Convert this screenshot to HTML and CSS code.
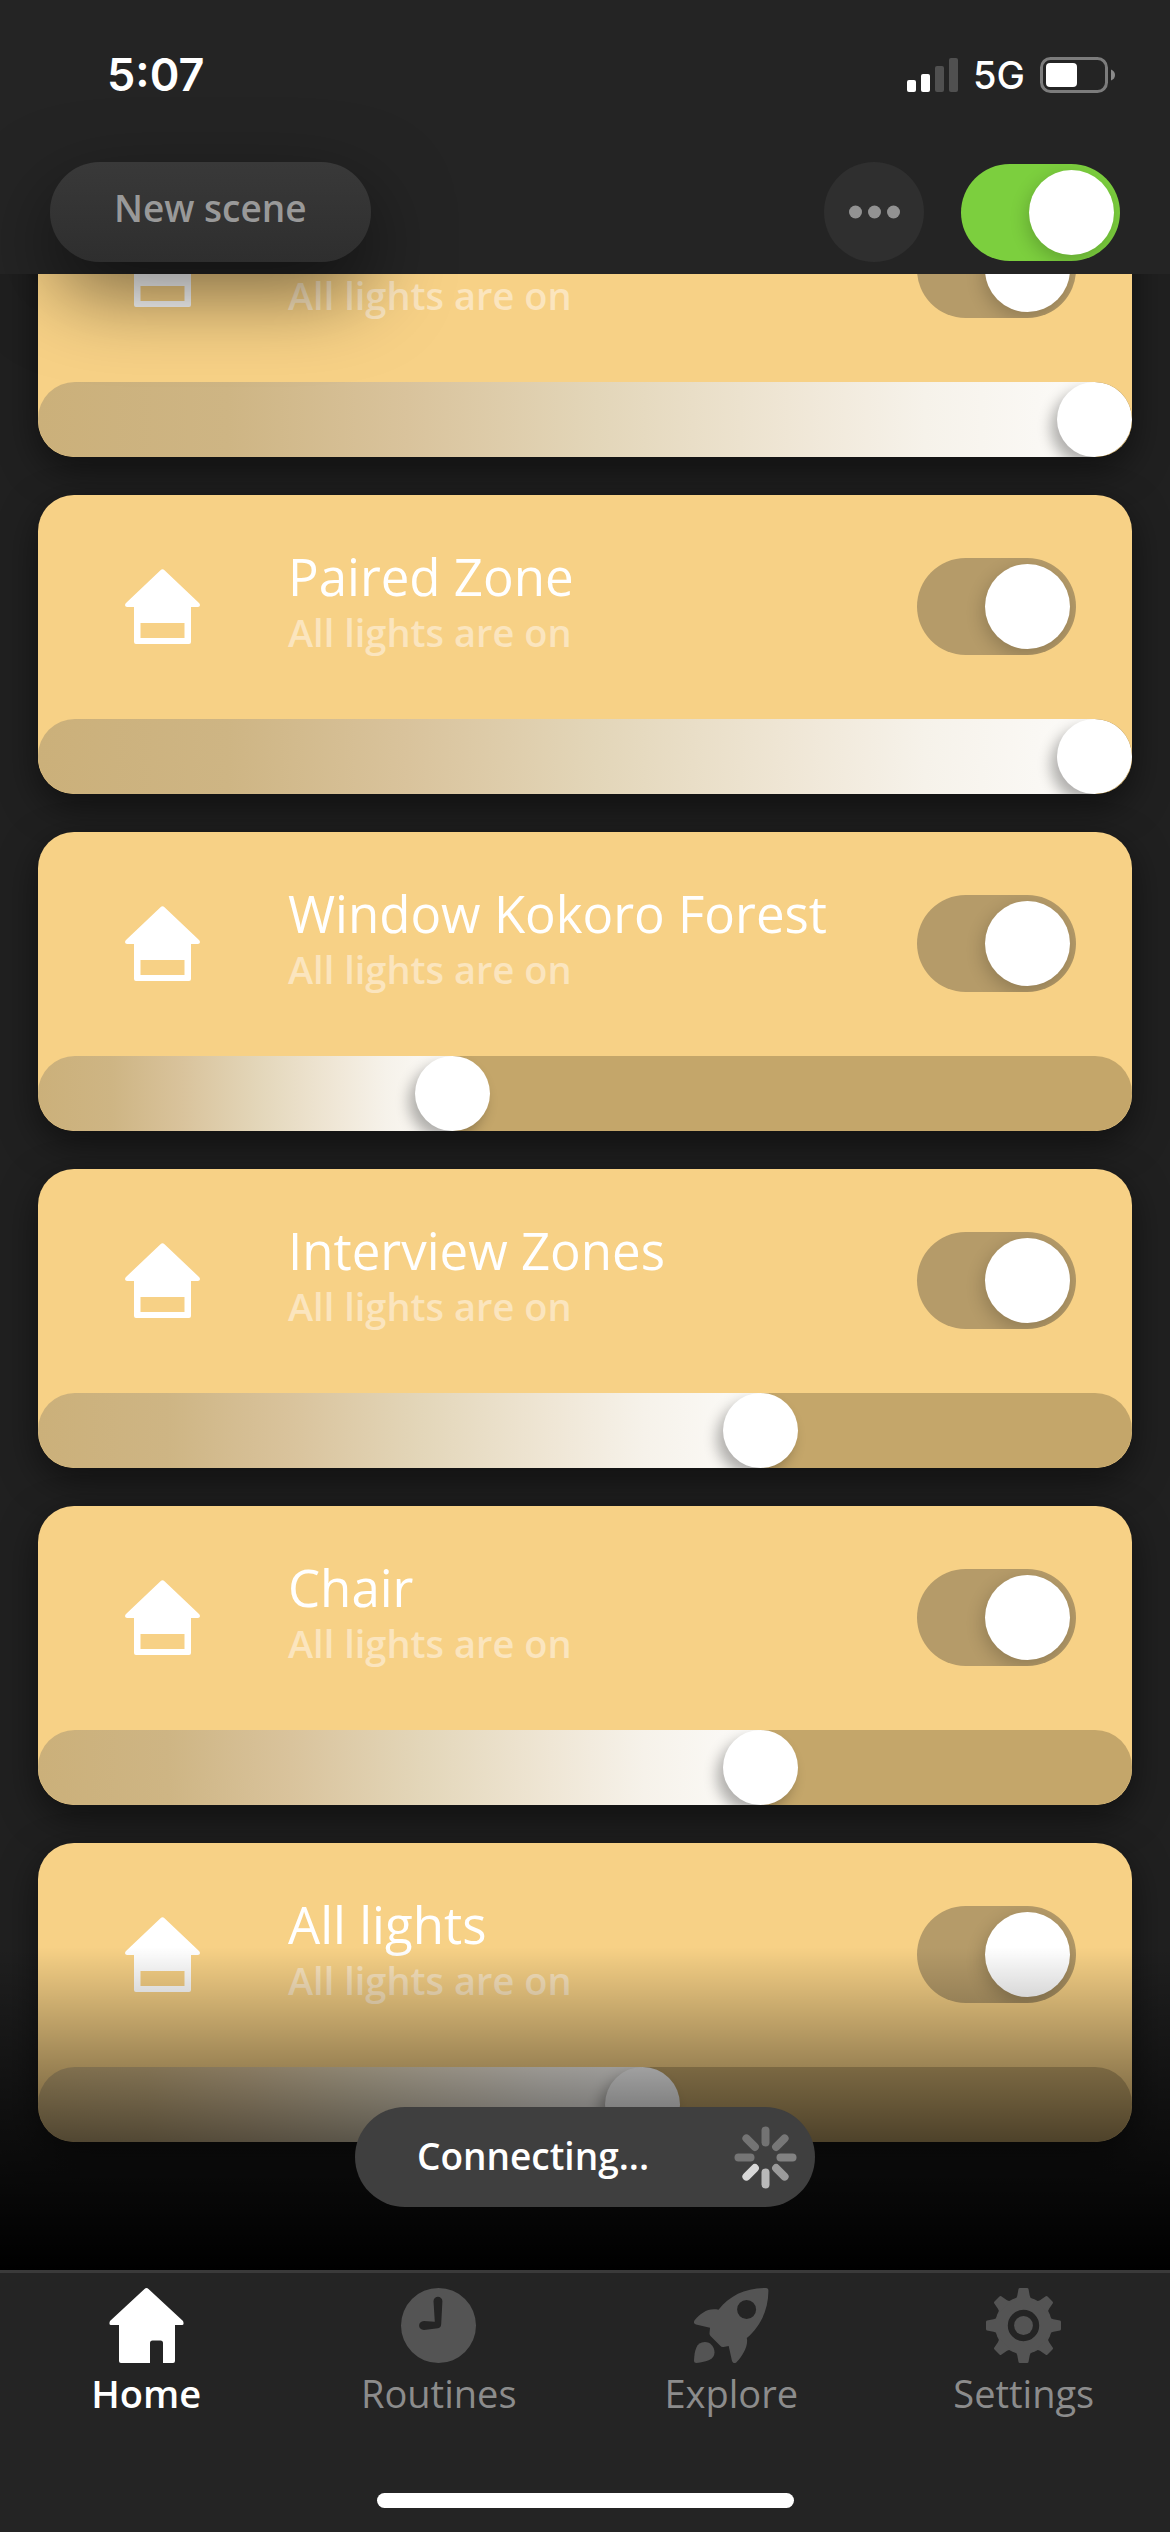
FILE: index.html
```html
<!DOCTYPE html>
<html lang="en">
<head>
<meta charset="utf-8">
<meta name="viewport" content="width=device-width">
<title>Home</title>
<link rel="stylesheet" href="styles.css">
</head>
<body>
<svg class="sprite" aria-hidden="true">
  <symbol id="zone" viewBox="0 0 75 75">
    <path fill-rule="evenodd" d="M35.5 1.2Q37.5-.8 39.5 1.2L74 34Q75.500 35.800 74.600 37.200Q74 38 72.500 38H66V73Q66 75 64 75H11Q9 75 9 73V38H2.500Q1 38 .4 37.200Q-.5 35.800 1 34ZM15.500 54V69H59.500V54Z"/>
  </symbol>
</svg>
<div class="app">
  <header class="top">
    <div class="status">
      <span class="time">5:07</span>
      <div class="signals">
        <svg width="51" height="34" viewBox="0 0 51 34" aria-hidden="true">
          <rect x="0" y="22" width="9" height="12" rx="2" fill="#fff"/>
          <rect x="14" y="16" width="9" height="18" rx="2" fill="#fff"/>
          <rect x="28" y="8" width="9" height="26" rx="2" fill="#505050"/>
          <rect x="42" y="0" width="9" height="34" rx="2" fill="#505050"/>
        </svg>
        <span class="network">5G</span>
        <svg width="75" height="36" viewBox="0 0 75 36" aria-hidden="true">
          <rect x="1.500" y="1.500" width="65" height="33" rx="9" fill="none" stroke="#7c7c7c" stroke-width="3"/>
          <rect x="6" y="6" width="31" height="24" rx="4" fill="#fff"/>
          <path d="M71 12.500q4 1.500 4 5.500t-4 5.500z" fill="#8a8a8a"/>
        </svg>
      </div>
    </div>
    <div class="actions">
      <button class="scene" type="button">New scene</button>
      <button class="more" type="button" aria-label="More">
        <svg width="51" height="14" viewBox="0 0 51 14" fill="#929292" aria-hidden="true"><circle cx="6.500" cy="7" r="6.500"/><circle cx="25.500" cy="7" r="6.500"/><circle cx="44.500" cy="7" r="6.500"/></svg>
      </button>
      <input class="toggle toggle-main" type="checkbox" aria-label="All rooms" checked>
    </div>
  </header>

  <main class="zones">
    <section class="card">
      <div class="card-body">
        <svg class="icon" aria-hidden="true"><use href="#zone"/></svg>
        <div class="copy"><p>All lights are on</p></div>
        <input class="toggle" type="checkbox" aria-label="Zone power" checked>
      </div>
      <input class="dimmer" type="range" step="0.1" value="100" style="--v:1" aria-label="Zone brightness">
    </section>
    <section class="card">
      <div class="card-body">
        <svg class="icon" aria-hidden="true"><use href="#zone"/></svg>
        <div class="copy"><h2>Paired Zone</h2><p>All lights are on</p></div>
        <input class="toggle" type="checkbox" aria-label="Paired Zone power" checked>
      </div>
      <input class="dimmer" type="range" step="0.1" value="100" style="--v:1" aria-label="Paired Zone brightness">
    </section>
    <section class="card">
      <div class="card-body">
        <svg class="icon" aria-hidden="true"><use href="#zone"/></svg>
        <div class="copy"><h2>Window Kokoro Forest</h2><p>All lights are on</p></div>
        <input class="toggle" type="checkbox" aria-label="Window Kokoro Forest power" checked>
      </div>
      <input class="dimmer" type="range" step="0.1" value="37" style="--v:.37" aria-label="Window Kokoro Forest brightness">
    </section>
    <section class="card">
      <div class="card-body">
        <svg class="icon" aria-hidden="true"><use href="#zone"/></svg>
        <div class="copy"><h2>Interview Zones</h2><p>All lights are on</p></div>
        <input class="toggle" type="checkbox" aria-label="Interview Zones power" checked>
      </div>
      <input class="dimmer" type="range" step="0.1" value="67.2" style="--v:.672" aria-label="Interview Zones brightness">
    </section>
    <section class="card">
      <div class="card-body">
        <svg class="icon" aria-hidden="true"><use href="#zone"/></svg>
        <div class="copy"><h2>Chair</h2><p>All lights are on</p></div>
        <input class="toggle" type="checkbox" aria-label="Chair power" checked>
      </div>
      <input class="dimmer" type="range" step="0.1" value="67.2" style="--v:.672" aria-label="Chair brightness">
    </section>
    <section class="card">
      <div class="card-body">
        <svg class="icon" aria-hidden="true"><use href="#zone"/></svg>
        <div class="copy"><h2>All lights</h2><p>All lights are on</p></div>
        <input class="toggle" type="checkbox" aria-label="All lights power" checked>
      </div>
      <input class="dimmer" type="range" step="0.1" value="55.6" style="--v:.556" aria-label="All lights brightness">
    </section>

    <div class="toast" role="status">
      <span>Connecting...</span>
      <svg width="63" height="63" viewBox="-31.500 -31.500 63 63" stroke-width="8" stroke-linecap="round" aria-hidden="true">
        <path d="M0-27V-15" stroke="#737373"/>
        <path d="M0-27V-15" stroke="#777" transform="rotate(45)"/>
        <path d="M0-27V-15" stroke="#828282" transform="rotate(90)"/>
        <path d="M0-27V-15" stroke="#9b9b9b" transform="rotate(135)"/>
        <path d="M0-27V-15" stroke="#b9b9b9" transform="rotate(180)"/>
        <path d="M0-27V-15" stroke="#d8d8d8" transform="rotate(225)"/>
        <path d="M0-27V-15" stroke="#757575" transform="rotate(270)"/>
        <path d="M0-27V-15" stroke="#747474" transform="rotate(315)"/>
      </svg>
    </div>
  </main>

  <footer class="bottom">
    <nav class="tabs">
      <a class="tab tab-active" href="#home" aria-current="page">
        <svg class="icon" viewBox="0 0 75 75" aria-hidden="true"><path d="M35.500 1Q37.500-1 39.500 1L74 33Q75.500 37 73 37H66V73Q66 75 64 75H54V55Q54 52.500 51.500 52.500H43.500Q41 52.500 41 55V75H12Q10 75 10 73V37H2Q-.5 37 1 33Z"/></svg>
        <span>Home</span>
      </a>
      <a class="tab" href="#routines">
        <svg class="icon" viewBox="0 0 75 75" aria-hidden="true"><path fill-rule="evenodd" d="M37.500 0A37.500 37.500 0 1 1 37.500 75A37.500 37.500 0 1 1 37.500 0ZM32.500 13.300L33.800 33.800L23 33C16.500 33 16.500 42 23 42L37 40.200Q40 40 40.200 36L41.400 13.300C41.400 7.300 32.500 7.300 32.500 13.300Z"/></svg>
        <span>Routines</span>
      </a>
      <a class="tab" href="#explore">
        <svg class="icon" viewBox="0 0 75 75" aria-hidden="true"><path fill-rule="evenodd" d="M72 0Q74.500 0 74.400 3C74.400 22 66 39 52.800 50C54.500 58 49 67.500 42.500 74.300Q39.500 76.500 38 73L34.700 58L29.500 59Q27.500 59.300 26 57.500L16.500 48Q15.200 46.500 15.600 44.500L16 39.800L2 36.500Q-1.500 35.500.8 32C7 25 14 19.500 24.500 21.700C36 7.500 51 0 72 0ZM52.600 12A9.500 9.500 0 1 0 52.600 31A9.500 9.500 0 1 0 52.600 12Z"/><path d="M10.900 54C16.500 54 20.500 59 20.500 64.500C20.500 72 12.500 73.500 2.500 75Q0 75 0 72.500C.5 63 2 54 10.900 54Z"/></svg>
        <span>Explore</span>
      </a>
      <a class="tab" href="#settings">
        <svg class="icon" viewBox="-37.500 -37.500 75 75" aria-hidden="true">
          <path fill-rule="evenodd" d="M0-28.500A28.500 28.500 0 1 1 0 28.500A28.500 28.500 0 1 1 0-28.500ZM0-15.700A15.700 15.700 0 1 0 0 15.700A15.700 15.700 0 1 0 0-15.700Z"/>
          <circle r="9.400"/>
          <g id="teeth"><path id="tooth" d="M-9-26Q-6.500-27.500-6.200-30L-5-36.500Q-4.800-37.500-3.500-37.500H3.500Q4.800-37.500 5-36.500L6.200-30Q6.500-27.500 9-26Z"/><use href="#tooth" transform="rotate(90)"/><use href="#tooth" transform="rotate(180)"/><use href="#tooth" transform="rotate(270)"/></g>
          <use href="#teeth" transform="rotate(45)"/>
        </svg>
        <span>Settings</span>
      </a>
    </nav>
    <div class="home-bar"></div>
  </footer>
</div>
</body>
</html>
```
FILE: styles.css
```css
* { box-sizing: border-box; }

body {
  margin: 0;
  background: #000;
  color: #fff;
  font-family: "Open Sans", sans-serif;
}

.sprite { display: none; }

.app {
  display: flex;
  flex-direction: column;
  height: 100vh;
}

/* Header */
.top {
  position: relative;
  z-index: 1;
  background: #242424;
  padding-bottom: 12px;
}

.status {
  display: flex;
  justify-content: space-between;
  align-items: center;
  height: 150px;
  padding: 0 55px 0 107px;
  font-family: Inter, sans-serif;
}

.time { font-size: 45px; font-weight: 600; line-height: 56px; }

.signals { display: flex; align-items: center; gap: 15px; }

.network { font-size: 38px; font-weight: 500; line-height: 40px; }

.actions {
  display: flex;
  align-items: center;
  padding: 12px 50px 0;
}

.scene {
  height: 100px;
  margin: 0 auto 0 0;
  padding: 0 64px 8px;
  border: 0;
  border-radius: 50px;
  background: linear-gradient(#393939, #2e2e2e);
  box-shadow: 0 30px 80px rgba(0, 0, 0, .52);
  color: #999;
  font: 600 37px/52px "Open Sans", sans-serif;
}

.more {
  display: flex;
  align-items: center;
  justify-content: center;
  width: 100px;
  height: 100px;
  margin: 0 37px 0 0;
  padding: 0;
  border: 0;
  border-radius: 50%;
  background: #2f2f2f;
}

.toggle {
  appearance: none;
  flex: none;
  display: flex;
  justify-content: flex-end;
  width: 159px;
  height: 97px;
  margin: 0;
  padding: 6px;
  border-radius: 49px;
  background: #b59b69;
  overflow: hidden;
}

.toggle::before {
  content: "";
  width: 85px;
  height: 85px;
  border-radius: 50%;
  background: #fff;
  box-shadow: -2px 6px 18px rgba(0, 0, 0, .2);
}

.toggle:not(:checked) { justify-content: flex-start; }

.toggle-main { background: #7ccf3e; }

/* Zone list, scrolled to its end */
.zones {
  position: relative;
  flex: 1;
  min-height: 0;
  display: flex;
  flex-direction: column;
  justify-content: flex-end;
  gap: 38px;
  padding: 0 38px 128px;
  overflow: hidden;
  background: #202020;
}

.zones::after {
  content: "";
  position: absolute;
  inset: auto 0 0;
  height: 323px;
  background: linear-gradient(transparent, #000);
  pointer-events: none;
}

.card {
  flex: none;
  border-radius: 36px;
  overflow: hidden;
  background: #f7d186;
  box-shadow: 0 12px 36px rgba(0, 0, 0, .5);
}

.card-body {
  display: flex;
  align-items: center;
  gap: 88px;
  padding: 51px 56px 53px 87px;
}

.icon {
  flex: none;
  width: 75px;
  height: 75px;
  fill: currentColor;
}

.copy {
  flex: 1;
  min-width: 0;
  min-height: 120px;
  display: flex;
  flex-direction: column;
  justify-content: flex-end;
  padding-bottom: 8px;
}

.copy + .toggle { margin-left: -88px; }

.copy h2 {
  margin: 0;
  font-size: 51px;
  font-weight: 500;
  line-height: 60px;
}

.copy p {
  margin: 0;
  color: #fbe5be;
  font-size: 38px;
  font-weight: 600;
  line-height: 52px;
}

.dimmer {
  --fill: calc(37px + var(--v) * (100% - 75px));
  appearance: none;
  display: block;
  width: 100%;
  height: 75px;
  margin: 0;
  border-radius: 37px;
  overflow: hidden;
  background:
    linear-gradient(90deg, #cbb07a, #ceb584 18%, #d9c39c 35%, #e3d6b9 53%, #efe6d5 71%, #f6f2ea 84%, #fcfbf9) 0 0 / var(--fill) 100% no-repeat,
    #c4a66a;
}

.dimmer::-webkit-slider-thumb {
  appearance: none;
  width: 75px;
  height: 75px;
  border-radius: 50%;
  background: #fff;
  box-shadow: -6px 8px 14px rgba(0, 0, 0, .3);
}

.toast {
  position: absolute;
  z-index: 1;
  bottom: 63px;
  left: 50%;
  transform: translateX(-50%);
  display: flex;
  align-items: center;
  justify-content: space-between;
  width: 460px;
  height: 100px;
  padding: 0 18px 0 62px;
  border-radius: 50px;
  background: #3f3f3f;
  font-size: 37px;
  font-weight: 600;
  line-height: 52px;
}

.toast span { padding-bottom: 2px; }

/* Tab bar */
.bottom {
  background: #242424;
  border-top: 3px solid #3a3a3a;
  padding: 15px 0 24px;
}

.tabs {
  display: grid;
  grid-template-columns: repeat(4, 1fr);
}

.tab {
  display: flex;
  flex-direction: column;
  align-items: center;
  gap: 4px;
  color: #8c8c8c;
  font-size: 38px;
  font-weight: 400;
  line-height: 52px;
  text-decoration: none;
}

.tab .icon { color: #545454; }

.tab-active { color: #fff; font-weight: 600; }
.tab-active .icon { color: #fff; }

.home-bar {
  width: 417px;
  height: 15px;
  margin: 74px auto 0;
  border-radius: 8px;
  background: #fff;
}
```
